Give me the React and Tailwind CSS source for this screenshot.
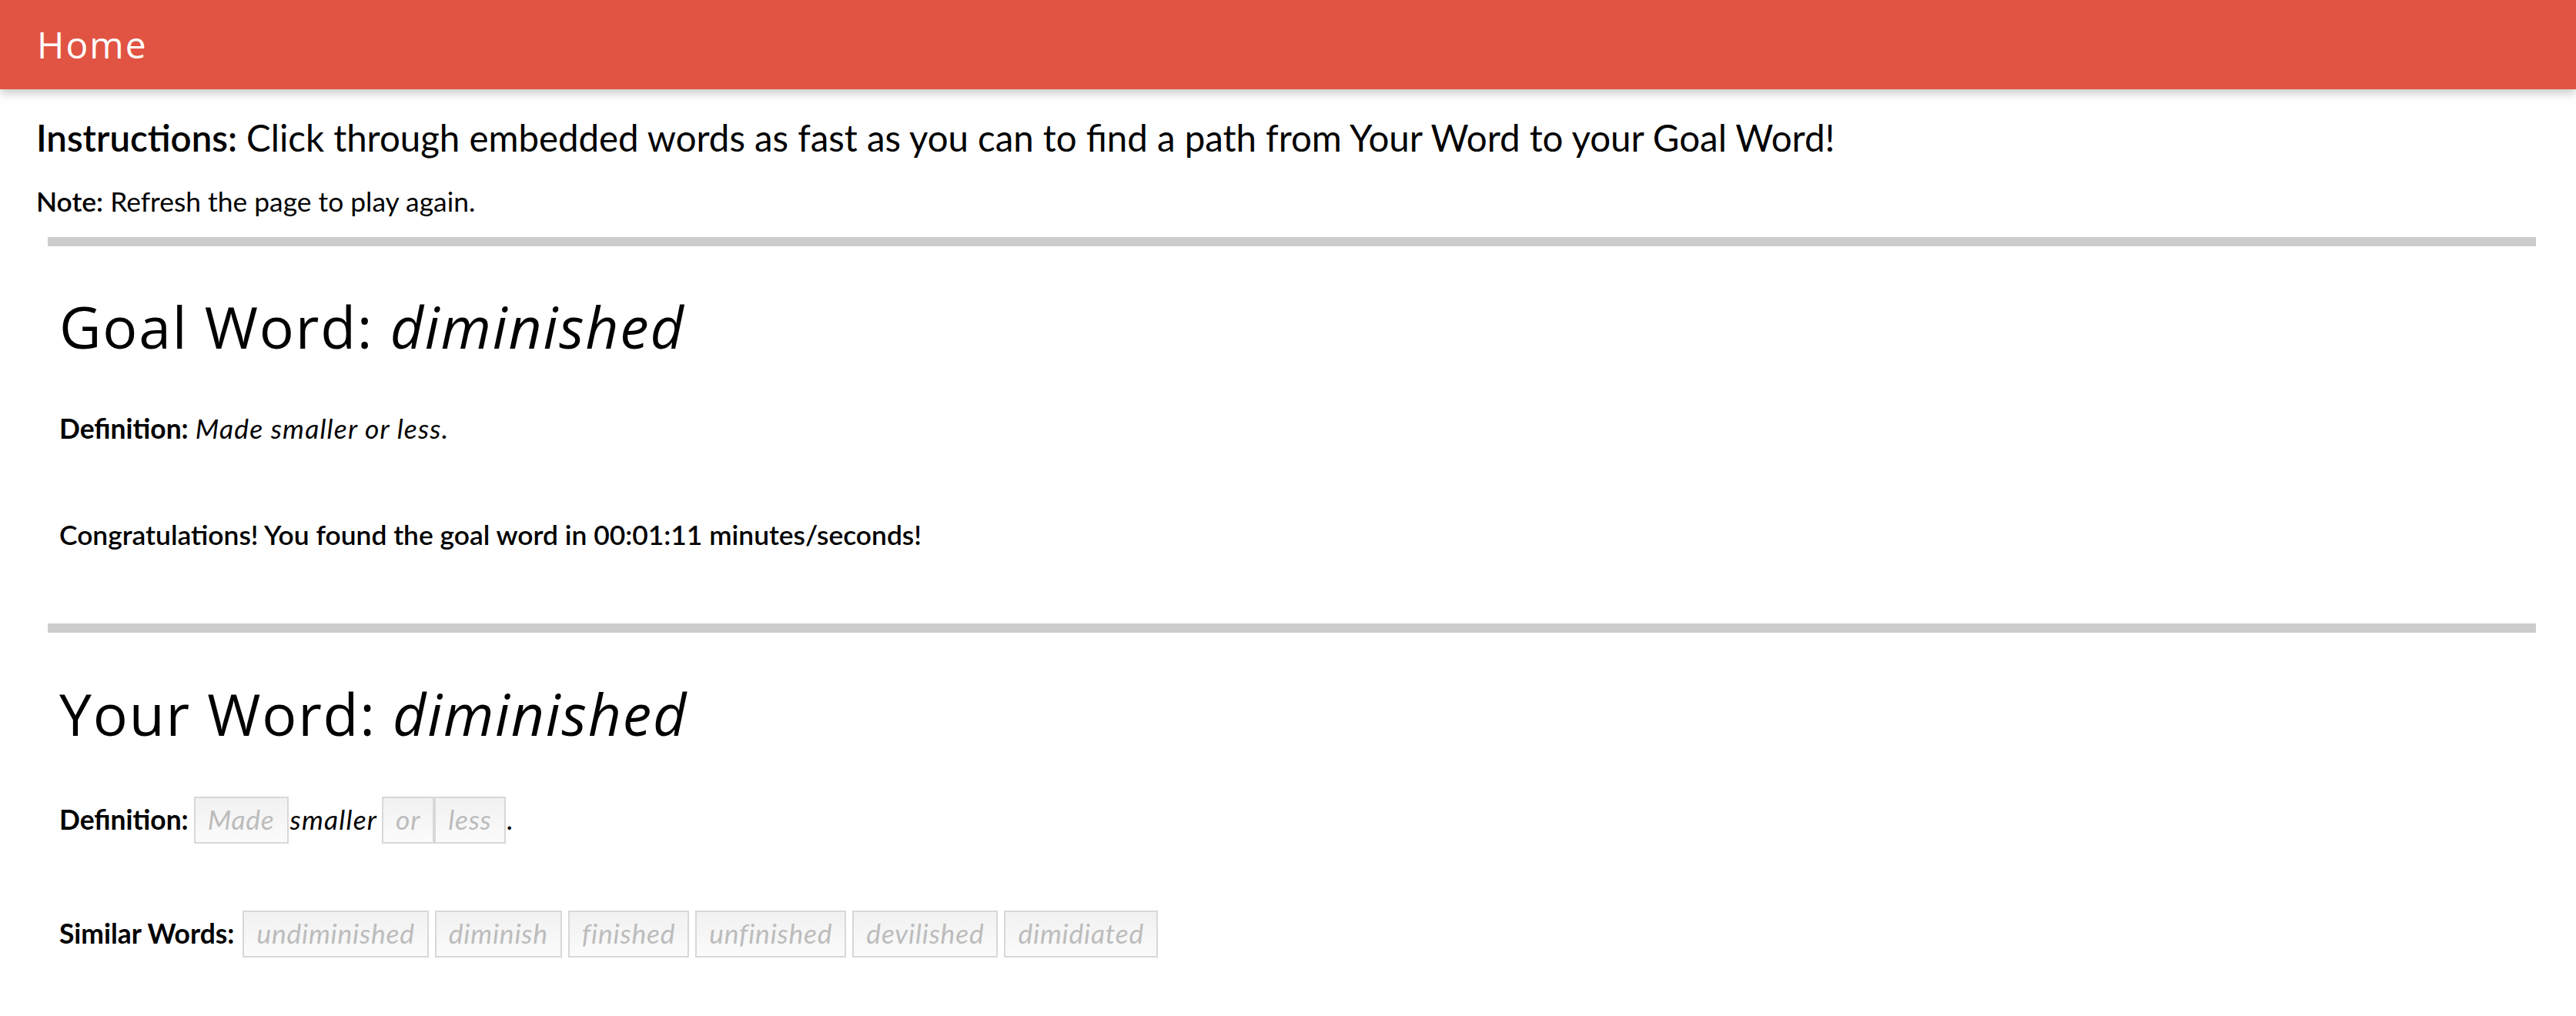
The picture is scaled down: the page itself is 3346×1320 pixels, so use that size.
import React from 'react';

const body = { fontFamily: 'Lato, "Open Sans", sans-serif' };
const head = { fontFamily: '"Open Sans", "DejaVu Sans", sans-serif' };

const WordBox = ({ word, className = '' }) => (
    <span className={`inline-block border-2 border-[#d8d8d8] bg-gradient-to-b from-[#f1f1f1] to-[#fbfbfb] px-[16px] py-[7px] text-[#bcbcbc] italic tracking-[0.8px] leading-[1.2] ${className}`}>
        {word}
    </span>
);

const similarWords = ['undiminished', 'diminish', 'finished', 'unfinished', 'devilished', 'dimidiated'];

export default function App() {
    return (
        <div className="min-h-screen bg-white text-black" style={body}>
            <header className="h-[116px] bg-[#e15443] flex items-center px-[48px] shadow-[0_5px_12px_rgba(0,0,0,0.22)]">
                <span className="text-white text-[48px] font-medium tracking-[2px] leading-none" style={head}>Home</span>
            </header>

            <div className="px-[47px]">
                <p className="mt-[35px] text-[47.4px] leading-[1.2]">
                    <span className="font-semibold">Instructions:</span> Click through embedded words as fast as you can to find a path from Your Word to your Goal Word!
                </p>
                <p className="mt-[33px] text-[35.4px] leading-[1.2]">
                    <span className="font-semibold">Note:</span> Refresh the page to play again.
                </p>
            </div>

            <hr className="mt-[25px] ml-[62px] mr-[52px] h-[12px] border-0 bg-[#cccccc]" />

            {/* goal word section */}
            <section className="px-[77px]">
                <h1 className="mt-[59px] text-[75px] font-medium tracking-[1.8px] leading-[1.2]" style={head}>
                    Goal Word: <em>diminished</em>
                </h1>
                <p className="mt-[67px] text-[35.4px] leading-[1.2]">
                    <span className="font-bold">Definition:</span> <em className="tracking-[1.2px]">Made smaller or less.</em>
                </p>
                <p className="mt-[95px] text-[35.4px] leading-[1.2] font-semibold">
                    Congratulations! You found the goal word in 00:01:11 minutes/seconds!
                </p>
            </section>

            <hr className="mt-[94px] ml-[62px] mr-[52px] h-[12px] border-0 bg-[#cccccc]" />

            {/* your word section */}
            <section className="px-[77px]">
                <h1 className="mt-[60px] text-[75px] font-medium tracking-[1.8px] leading-[1.2]" style={head}>
                    Your Word: <em>diminished</em>
                </h1>
                <div className="mt-[62px] flex items-center h-[62px] text-[35.4px] leading-[1.2]">
                    <span className="font-bold mr-[7px]">Definition:</span>
                    <WordBox word="Made" />
                    <em className="ml-[2px] mr-[6px] tracking-[1.2px]">smaller</em>
                    <WordBox word="or" />
                    <WordBox word="less" />
                    <span className="ml-[1px]">.</span>
                </div>
                <div className="mt-[86px] flex items-center h-[62px] text-[35.4px] leading-[1.2]">
                    <span className="font-bold mr-[11px]">Similar Words:</span>
                    <div className="flex gap-[8px]">
                        {similarWords.map((w) => (
                            <WordBox key={w} word={w} />
                        ))}
                    </div>
                </div>
            </section>
        </div>
    );
}
